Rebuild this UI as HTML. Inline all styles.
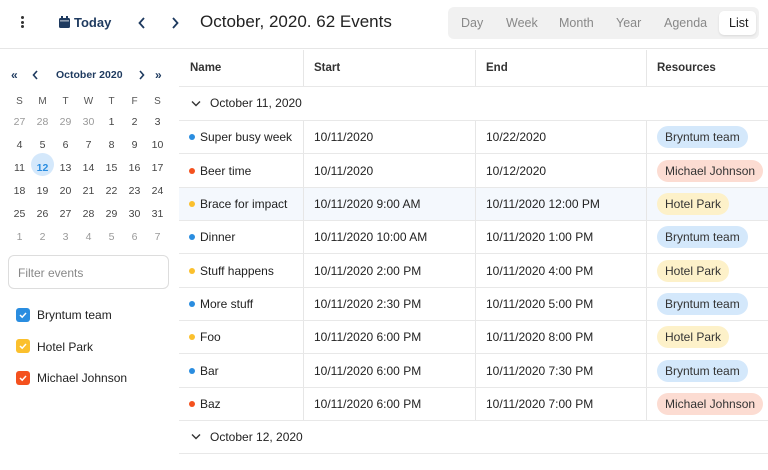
<!DOCTYPE html>
<html><head><style>
*{box-sizing:border-box;margin:0;padding:0}
body{width:768px;height:470px;overflow:hidden;font-family:"Liberation Sans",sans-serif;color:#222;background:#fff;position:relative;font-size:12px}
.a{position:absolute}
.tb{top:0;left:0;width:768px;height:49px;border-bottom:1px solid #e6e6e6}
.seg{left:448px;top:7px;width:311px;height:32px;background:#f1f1f1;border-radius:6px}
.seg span{position:absolute;top:9px;font-size:12.5px;color:#888}
.cal td{width:23px;height:23px;text-align:center;font-size:10.5px;color:#444;padding:0}
.cal .o{color:#999}
.cal th{font-weight:normal;font-size:10px;color:#555;height:18px;padding:0}
.col{top:50px;bottom:0;width:1px;background:#e6e6e6}
.hl{left:179px;width:589px;height:1px;background:#e8e8e8}
.cell{font-size:12px;color:#222}
.dot{width:6px;height:6px;border-radius:50%}
.tag{height:22px;border-radius:11px;padding:0 8px;line-height:22px;font-size:12px;color:#333}
.cb{width:14px;height:14px;border-radius:3px;left:16px}
.cb svg{position:absolute;left:2px;top:2px}
</style></head><body>
<div class="a tb"></div>
<div class="a" style="left:21px;top:16px;width:3px">
<div style="width:3px;height:3px;background:#333;border-radius:50%;margin-bottom:1.5px"></div><div style="width:3px;height:3px;background:#333;border-radius:50%;margin-bottom:1.5px"></div><div style="width:3px;height:3px;background:#333;border-radius:50%"></div></div>
<svg class="a" style="left:59px;top:16px" width="11" height="12" viewBox="0 0 11 12"><rect x="0" y="2" width="11" height="10" rx="1.5" fill="#1e3a5f"/><rect x="2" y="0" width="2" height="3" fill="#1e3a5f"/><rect x="7" y="0" width="2" height="3" fill="#1e3a5f"/><rect x="1" y="4.5" width="9" height="0.8" fill="#fff"/></svg>
<div class="a" style="left:74px;top:15px;font-size:13px;font-weight:bold;color:#1e3a5f">Today</div>
<svg class="a" style="left:138px;top:17px" width="8" height="12"><path d="M6 1L1.5 6L6 11" stroke="#1e3a5f" stroke-width="1.8" fill="none"/></svg>
<svg class="a" style="left:171px;top:17px" width="8" height="12"><path d="M2 1L6.5 6L2 11" stroke="#1e3a5f" stroke-width="1.8" fill="none"/></svg>
<div class="a" style="left:200px;top:12px;font-size:17px;color:#222">October, 2020. 62 Events</div>
<div class="a seg">
<span style="left:13px">Day</span><span style="left:58px">Week</span><span style="left:111px">Month</span><span style="left:168px">Year</span><span style="left:216px">Agenda</span>
<div class="a" style="left:271px;top:4px;width:37px;height:24px;background:#fff;border-radius:5px;box-shadow:0 1px 2px rgba(0,0,0,.1)"></div>
<span style="left:281px;color:#222">List</span></div>

<div class="a" style="left:11px;top:68px;font-size:12px;font-weight:bold;color:#1e3a5f">«</div>
<svg class="a" style="left:32px;top:70px" width="7" height="10"><path d="M5 1L1.5 5L5 9" stroke="#1e3a5f" stroke-width="1.6" fill="none"/></svg>
<div class="a" style="left:56px;top:69px;font-size:10.5px;font-weight:bold;color:#1e3a5f">October 2020</div>
<svg class="a" style="left:138px;top:70px" width="7" height="10"><path d="M2 1L5.5 5L2 9" stroke="#1e3a5f" stroke-width="1.6" fill="none"/></svg>
<div class="a" style="left:155px;top:68px;font-size:12px;font-weight:bold;color:#1e3a5f">»</div>
<div class="a" style="left:31px;top:153px;width:23px;height:23px;border-radius:50%;background:#d4e8fb"></div>
<table class="a cal" style="left:8px;top:92px;border-collapse:collapse">
<tr><th>S</th><th>M</th><th>T</th><th>W</th><th>T</th><th>F</th><th>S</th></tr>
<tr><td class="o">27</td><td class="o">28</td><td class="o">29</td><td class="o">30</td><td>1</td><td>2</td><td>3</td></tr>
<tr><td>4</td><td>5</td><td>6</td><td>7</td><td>8</td><td>9</td><td>10</td></tr>
<tr><td>11</td><td style="color:#2a8de0;font-weight:bold">12</td><td>13</td><td>14</td><td>15</td><td>16</td><td>17</td></tr>
<tr><td>18</td><td>19</td><td>20</td><td>21</td><td>22</td><td>23</td><td>24</td></tr>
<tr><td>25</td><td>26</td><td>27</td><td>28</td><td>29</td><td>30</td><td>31</td></tr>
<tr><td class="o">1</td><td class="o">2</td><td class="o">3</td><td class="o">4</td><td class="o">5</td><td class="o">6</td><td class="o">7</td></tr>
</table>
<div class="a" style="left:8px;top:255px;width:161px;height:34px;border:1px solid #ddd;border-radius:6px;padding:10px 9px;color:#888;font-size:12px">Filter events</div>
<div class="a cb" style="top:308px;background:#2a8de0"><svg width="10" height="10"><path d="M2 5l2.2 2.2L8 3" stroke="#fff" stroke-width="1.5" fill="none"/></svg></div>
<div class="a cb" style="top:339px;background:#fbc02d"><svg width="10" height="10"><path d="M2 5l2.2 2.2L8 3" stroke="#fff" stroke-width="1.5" fill="none"/></svg></div>
<div class="a cb" style="top:371px;background:#f4511e"><svg width="10" height="10"><path d="M2 5l2.2 2.2L8 3" stroke="#fff" stroke-width="1.5" fill="none"/></svg></div>
<div class="a" style="left:37px;top:308px;font-size:12px">Bryntum team</div>
<div class="a" style="left:37px;top:340px;font-size:12px">Hotel Park</div>
<div class="a" style="left:37px;top:371px;font-size:12px">Michael Johnson</div>

<div class="a" style="left:179px;top:187px;width:589px;height:33px;background:#f4f8fd"></div>
<div class="a col" style="left:303px;top:50px;bottom:auto;height:37px"></div>
<div class="a col" style="left:475px;top:50px;bottom:auto;height:37px"></div>
<div class="a col" style="left:646px;top:50px;bottom:auto;height:37px"></div>
<div class="a col" style="left:303px;top:120px;height:300px;bottom:auto"></div>
<div class="a col" style="left:475px;top:120px;height:300px;bottom:auto"></div>
<div class="a col" style="left:646px;top:120px;height:300px;bottom:auto"></div>
<div class="a hl" style="top:86px"></div>
<div class="a hl" style="top:120px"></div>
<div class="a hl" style="top:153px"></div>
<div class="a hl" style="top:187px"></div>
<div class="a hl" style="top:220px"></div>
<div class="a hl" style="top:253px"></div>
<div class="a hl" style="top:287px"></div>
<div class="a hl" style="top:320px"></div>
<div class="a hl" style="top:353px"></div>
<div class="a hl" style="top:387px"></div>
<div class="a hl" style="top:420px"></div>
<div class="a hl" style="top:453px"></div>
<div class="a" style="left:190px;top:62px;font-weight:bold;font-size:11.5px;color:#333">Name</div>
<div class="a" style="left:314px;top:62px;font-weight:bold;font-size:11.5px;color:#333">Start</div>
<div class="a" style="left:486px;top:62px;font-weight:bold;font-size:11.5px;color:#333">End</div>
<div class="a" style="left:657px;top:62px;font-weight:bold;font-size:11.5px;color:#333">Resources</div>
<svg class="a" style="left:191px;top:100px" width="10" height="7"><path d="M1 1.5L5 5.5L9 1.5" stroke="#333" stroke-width="1.4" fill="none"/></svg>
<div class="a" style="left:210px;top:96px;font-size:12px">October 11, 2020</div>
<svg class="a" style="left:191px;top:433px" width="10" height="7"><path d="M1 1.5L5 5.5L9 1.5" stroke="#333" stroke-width="1.4" fill="none"/></svg>
<div class="a" style="left:210px;top:430px;font-size:12px">October 12, 2020</div>

<div class="a dot" style="left:189px;top:134px;background:#2a8de0"></div><div class="a cell" style="left:200px;top:130px">Super busy week</div><div class="a cell" style="left:314px;top:130px">10/11/2020</div><div class="a cell" style="left:486px;top:130px">10/22/2020</div><div class="a tag" style="left:657px;top:126px;background:#d4e8fb">Bryntum team</div>
<div class="a dot" style="left:189px;top:168px;background:#f4511e"></div><div class="a cell" style="left:200px;top:164px">Beer time</div><div class="a cell" style="left:314px;top:164px">10/11/2020</div><div class="a cell" style="left:486px;top:164px">10/12/2020</div><div class="a tag" style="left:657px;top:160px;background:#fcdcd2">Michael Johnson</div>
<div class="a dot" style="left:189px;top:201px;background:#fbc02d"></div><div class="a cell" style="left:200px;top:197px">Brace for impact</div><div class="a cell" style="left:314px;top:197px">10/11/2020 9:00 AM</div><div class="a cell" style="left:486px;top:197px">10/11/2020 12:00 PM</div><div class="a tag" style="left:657px;top:193px;background:#fdf1c9">Hotel Park</div>
<div class="a dot" style="left:189px;top:234px;background:#2a8de0"></div><div class="a cell" style="left:200px;top:230px">Dinner</div><div class="a cell" style="left:314px;top:230px">10/11/2020 10:00 AM</div><div class="a cell" style="left:486px;top:230px">10/11/2020 1:00 PM</div><div class="a tag" style="left:657px;top:226px;background:#d4e8fb">Bryntum team</div>
<div class="a dot" style="left:189px;top:268px;background:#fbc02d"></div><div class="a cell" style="left:200px;top:264px">Stuff happens</div><div class="a cell" style="left:314px;top:264px">10/11/2020 2:00 PM</div><div class="a cell" style="left:486px;top:264px">10/11/2020 4:00 PM</div><div class="a tag" style="left:657px;top:260px;background:#fdf1c9">Hotel Park</div>
<div class="a dot" style="left:189px;top:301px;background:#2a8de0"></div><div class="a cell" style="left:200px;top:297px">More stuff</div><div class="a cell" style="left:314px;top:297px">10/11/2020 2:30 PM</div><div class="a cell" style="left:486px;top:297px">10/11/2020 5:00 PM</div><div class="a tag" style="left:657px;top:293px;background:#d4e8fb">Bryntum team</div>
<div class="a dot" style="left:189px;top:334px;background:#fbc02d"></div><div class="a cell" style="left:200px;top:330px">Foo</div><div class="a cell" style="left:314px;top:330px">10/11/2020 6:00 PM</div><div class="a cell" style="left:486px;top:330px">10/11/2020 8:00 PM</div><div class="a tag" style="left:657px;top:326px;background:#fdf1c9">Hotel Park</div>
<div class="a dot" style="left:189px;top:368px;background:#2a8de0"></div><div class="a cell" style="left:200px;top:364px">Bar</div><div class="a cell" style="left:314px;top:364px">10/11/2020 6:00 PM</div><div class="a cell" style="left:486px;top:364px">10/11/2020 7:30 PM</div><div class="a tag" style="left:657px;top:360px;background:#d4e8fb">Bryntum team</div>
<div class="a dot" style="left:189px;top:401px;background:#f4511e"></div><div class="a cell" style="left:200px;top:397px">Baz</div><div class="a cell" style="left:314px;top:397px">10/11/2020 6:00 PM</div><div class="a cell" style="left:486px;top:397px">10/11/2020 7:00 PM</div><div class="a tag" style="left:657px;top:393px;background:#fcdcd2">Michael Johnson</div>
</body></html>
